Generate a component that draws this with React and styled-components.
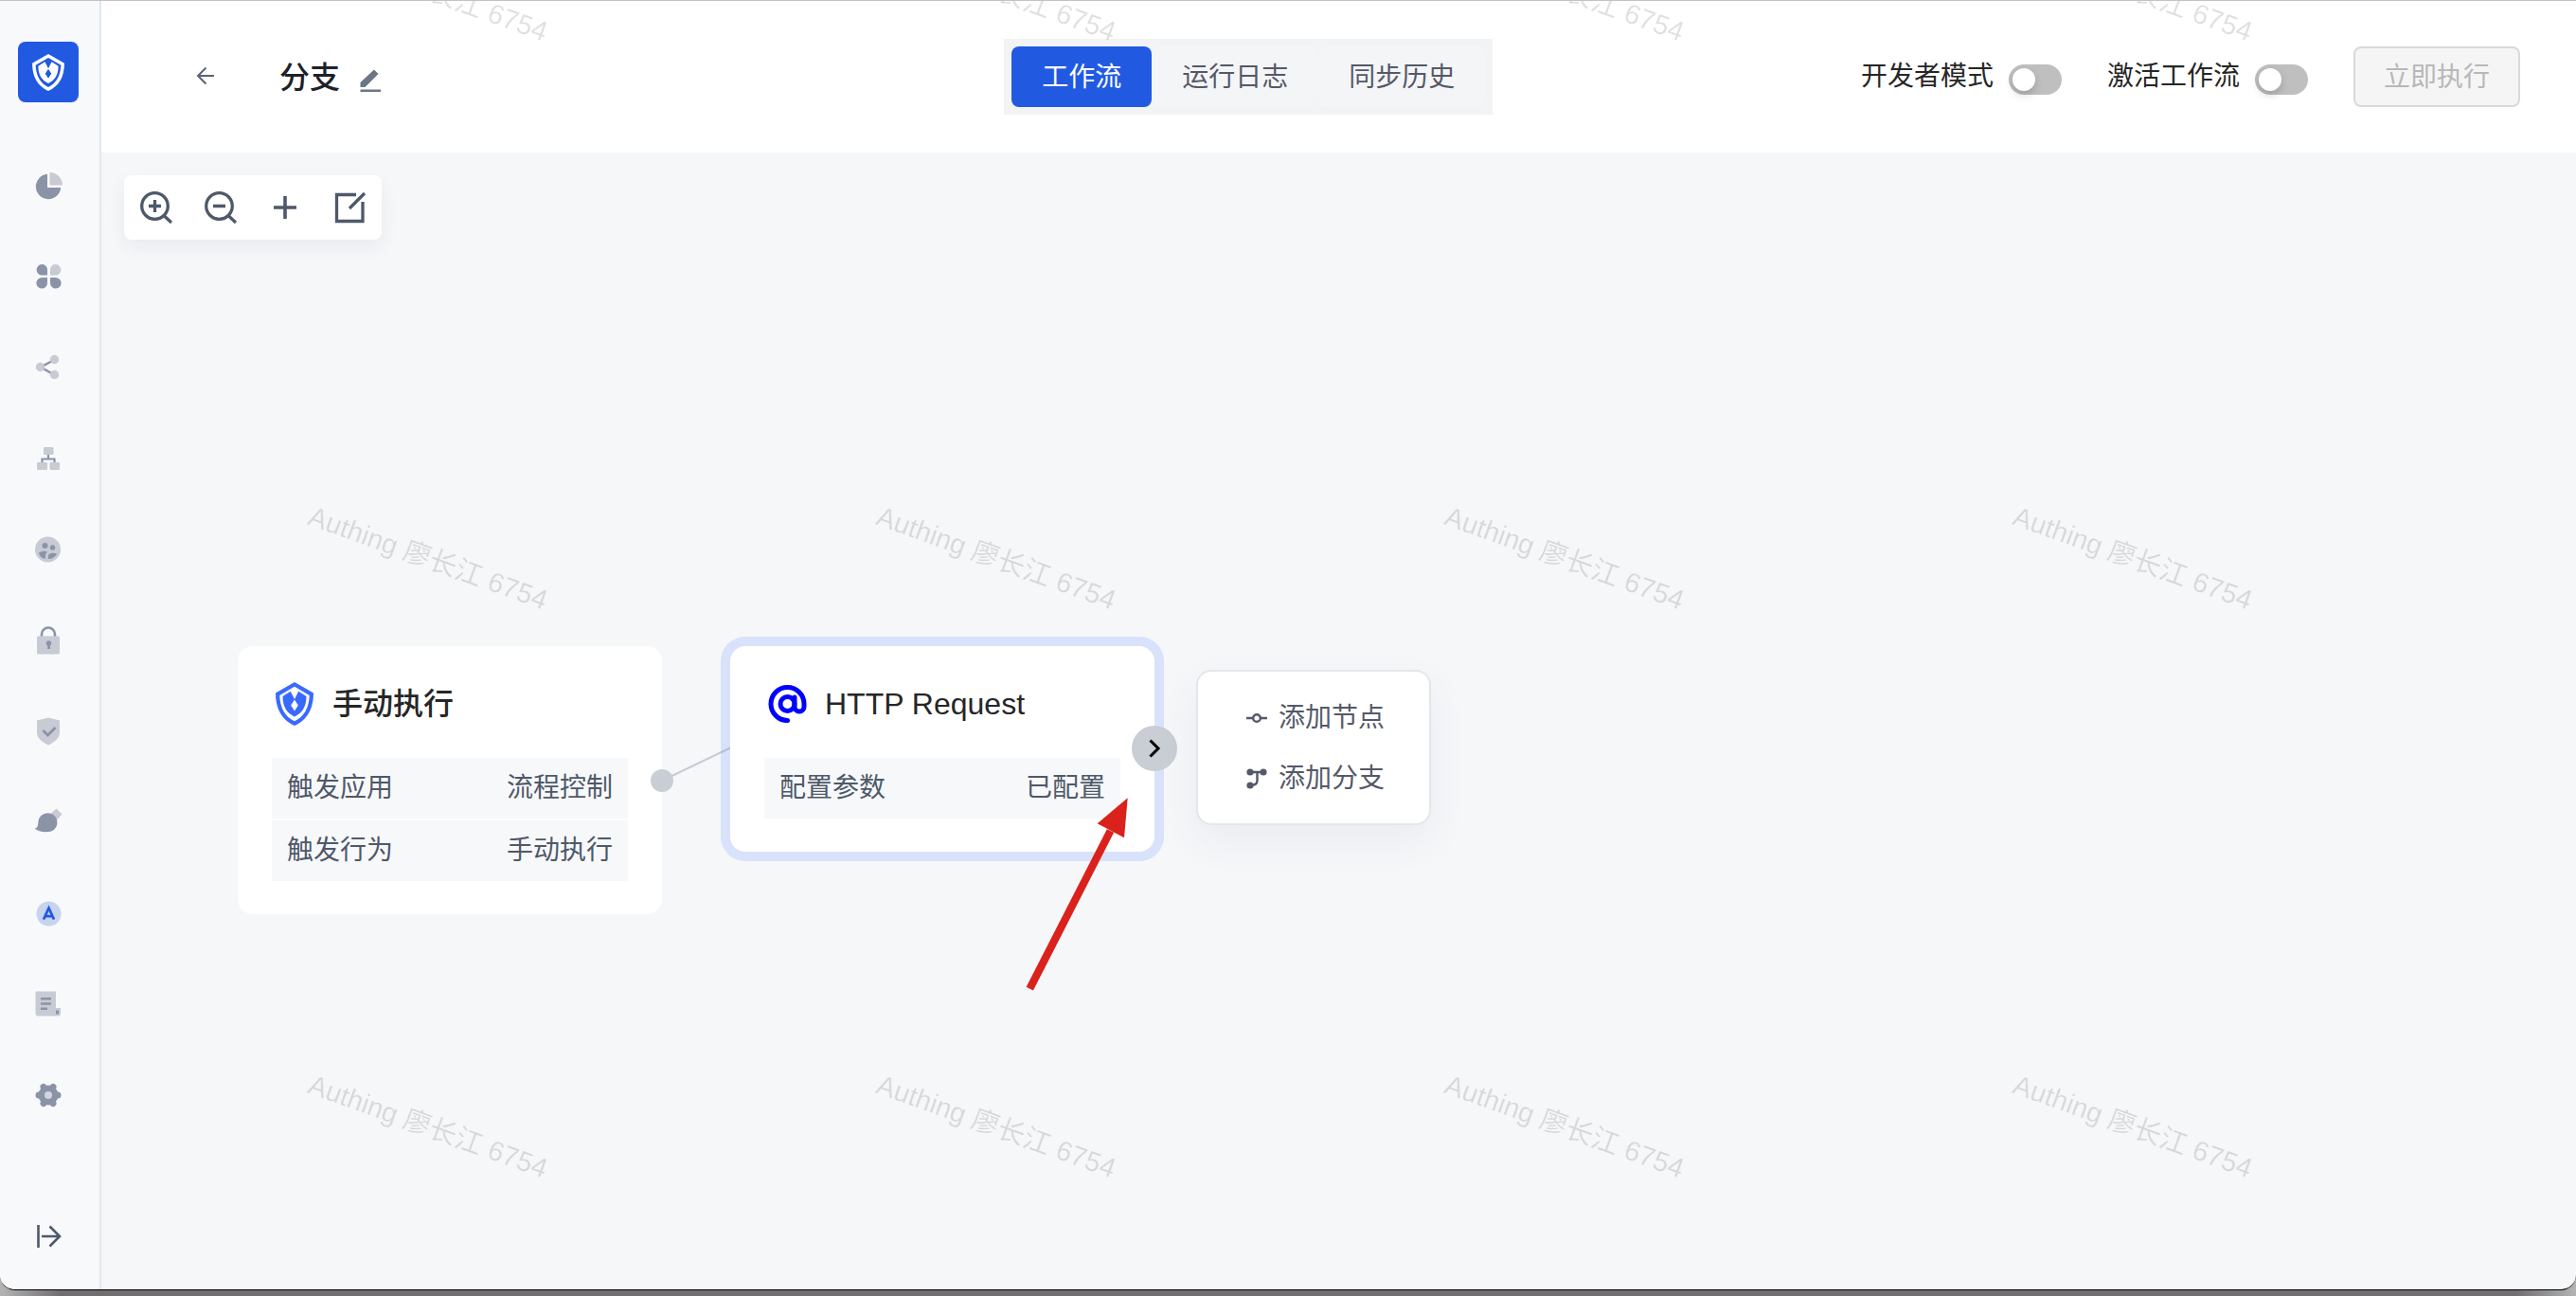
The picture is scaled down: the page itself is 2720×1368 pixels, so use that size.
import React, { useState } from "react";
import styled, { createGlobalStyle, css } from "styled-components";

const GlobalStyle = createGlobalStyle`
  * { box-sizing: border-box; }
  body {
    margin: 0;
    background: linear-gradient(90deg, #b4b4b4, #706e6e 64px calc(100% - 64px), #b4b4b4);
    font-family: "Liberation Sans", "Noto Sans CJK SC", sans-serif;
    font-size: 28px;
    color: #262626;
  }
  button { font-family: inherit; }
`;

const Window = styled.div`
  position: relative;
  display: flex;
  min-height: calc(100vh - 6px);
  overflow: hidden;
  border-top: 1px solid #c2c2c4;
  border-bottom: 1px solid #000;
  border-radius: 0 0 16px 16px;
  background: #f5f7f9;
`;

const Sidebar = styled.aside`
  flex: none;
  display: flex;
  flex-direction: column;
  width: 107px;
  padding: 43px 0 8px 19px;
  border-right: 2px solid #e4e6ec;
  background: #f7f9fb;
`;

const Brand = styled.a`
  display: grid;
  place-items: center;
  width: 64px;
  height: 64px;
  margin-bottom: 40px;
  border-radius: 8px;
  background: #215ae1;
`;

const Nav = styled.nav`
  flex: 1;
  display: flex;
  flex-direction: column;
`;

const navItem = css`
  display: grid;
  place-items: center;
  width: 64px;
  height: 96px;
`;

const NavLink = styled.a`
  ${navItem}
`;

const ExpandButton = styled.button`
  ${navItem}
  padding: 0;
  border: 0;
  background: none;
  cursor: pointer;
`;

const Main = styled.div`
  flex: 1;
  display: flex;
  flex-direction: column;
  min-width: 0;
`;

const Header = styled.header`
  display: grid;
  grid-template-columns: 5fr auto 6fr;
  align-items: center;
  height: 160px;
  background: #fff;
`;

const TitleGroup = styled.div`
  display: flex;
  align-items: center;
  padding-left: 96px;
`;

const IconButton = styled.button`
  display: grid;
  place-items: center;
  width: ${(p) => p.$size}px;
  height: ${(p) => p.$size}px;
  padding: 0;
  border: 0;
  background: none;
  cursor: pointer;
`;

const Title = styled.h1`
  margin: 0 16px 0 64px;
  padding-top: 2px;
  font-size: 32px;
  line-height: 48px;
  font-weight: 500;
  color: #1d2129;
`;

const Tabs = styled.div`
  display: flex;
  padding: 8px;
  background: #f1f3f5;
`;

const Tab = styled.button`
  height: 64px;
  padding: 2px 32px 0;
  border: 0;
  border-radius: 8px;
  font-size: 28px;
  line-height: 40px;
  color: ${(p) => (p.$active ? "#fff" : "#545968")};
  background: ${(p) => (p.$active ? "#215ae1" : "#f4f5f7")};
  cursor: pointer;
`;

const Actions = styled.div`
  display: flex;
  align-items: center;
  justify-content: flex-end;
  gap: 48px;
  padding-right: 59px;
`;

const SwitchLabel = styled.label`
  display: flex;
  align-items: flex-end;
  gap: 16px;
  line-height: 38px;
`;

const Switch = styled.input`
  appearance: none;
  width: 56px;
  height: 32px;
  margin: 0;
  padding: 4px;
  border-radius: 16px;
  background: ${(p) => (p.checked ? "#215ae1" : "#bfbfbf")};
  cursor: pointer;

  &::before {
    content: "";
    display: block;
    width: 24px;
    height: 24px;
    margin-left: ${(p) => (p.checked ? 24 : 0)}px;
    border-radius: 50%;
    background: #fff;
    box-shadow: 0 4px 8px rgba(0, 35, 11, 0.2);
  }
`;

const RunButton = styled.button`
  height: 64px;
  padding: 2px 30px 0;
  border: 2px solid #d9d9d9;
  border-radius: 8px;
  font-size: 28px;
  line-height: 40px;
  color: #b8b8b8;
  background: #f5f5f5;
`;

const Canvas = styled.main`
  position: relative;
  flex: 1;
  padding: 24px;
`;

const Toolbar = styled.div`
  display: inline-flex;
  border-radius: 8px;
  background: #fff;
  box-shadow: 0 8px 20px rgba(30, 40, 60, 0.06);
`;

const Edges = styled.svg`
  position: absolute;
  left: 0;
  top: 0;
  width: 100%;
  height: 100%;
  pointer-events: none;
`;

const Node = styled.section`
  position: absolute;
  left: ${(p) => p.$x}px;
  top: ${(p) => p.$y}px;
  width: 448px;
  padding: 36px 36px 35px;
  border-radius: 16px;
  background: #fff;
  box-shadow: ${(p) => (p.$selected ? "0 0 0 10px rgba(57, 106, 255, 0.15)" : "none")};
`;

const NodeHeader = styled.header`
  display: grid;
  grid-template-columns: 48px 1fr;
  column-gap: 16px;
  align-items: center;
  justify-items: center;
  height: 50px;
  margin-bottom: 32px;
`;

const NodeTitle = styled.h2`
  justify-self: start;
  margin: 0;
  font-size: 32px;
  line-height: 48px;
  font-weight: 500;
`;

const Params = styled.dl`
  display: grid;
  gap: 2px;
  margin: 0;
`;

const Param = styled.div`
  display: flex;
  align-items: center;
  justify-content: space-between;
  height: 64px;
  padding: 0 16px;
  line-height: 40px;
  color: #4e5969;
  background: #f7f8fa;

  dt, dd { margin: 0; }
`;

const Port = styled.span`
  position: absolute;
  right: -12px;
  top: 130px;
  width: 24px;
  height: 24px;
  border-radius: 50%;
  background: #c9cdd4;
`;

const AddButton = styled.button`
  position: absolute;
  right: -24px;
  top: 84px;
  display: grid;
  place-items: center;
  width: 48px;
  height: 48px;
  padding: 0;
  border: 0;
  border-radius: 50%;
  background: #c9cdd4;
  cursor: pointer;
`;

const Menu = styled.div`
  position: absolute;
  left: 1156px;
  top: 546px;
  width: 248px;
  padding: 16px 0;
  border: 2px solid #e5e6eb;
  border-radius: 16px;
  background: #fff;
  box-shadow: 0 16px 40px rgba(80, 80, 130, 0.07);
`;

const MenuItem = styled.button`
  display: flex;
  align-items: center;
  justify-content: center;
  gap: 12px;
  width: 100%;
  height: 64px;
  padding: 2px 0 0 4px;
  border: 0;
  font-size: 28px;
  line-height: 40px;
  color: #545968;
  background: none;
  cursor: pointer;
`;

const Watermarks = styled.div`
  position: absolute;
  inset: -312px 0 0 152px;
  display: grid;
  grid-template-columns: repeat(4, 600px);
  grid-auto-rows: 600px;
  overflow: hidden;
  pointer-events: none;
`;

const WatermarkCell = styled.div`
  display: grid;
  place-items: center;
`;

const WatermarkText = styled.span`
  transform: rotate(20deg);
  font-size: 29px;
  line-height: 40px;
  white-space: nowrap;
  color: rgba(0, 0, 0, 0.12);
`;

const Annotation = styled.svg`
  position: absolute;
  left: 970px;
  top: 670px;
  pointer-events: none;
`;

const DARK = "#8b93a7";
const LIGHT = "#c8cad4";

function Shield({ width, height, color, inner }) {
  return (
    <svg width={width} height={height} viewBox="0 0 40 46" aria-hidden="true">
      <path fill={color} fillRule="evenodd" d="M20 0 40 11.500C40 29 33 40 20 46 7 40 0 29 0 11.500ZM20 4.800 4.200 14C4.800 27.500 10 36.500 20 41.300 30 36.500 35.200 27.500 35.800 14Z" />
      <path fill={color} d="M15.800 9.800 20 18l4.200-8.200L32.500 15C32.500 25.500 28.500 32.500 20 36.500 11.500 32.500 7.500 25.500 7.500 15Z" />
      <path fill={inner} d="M20 18.500 23.800 24.500 20 30.500 16.200 24.500ZM18.700 14.500 20 17l1.300-2.500L20 12Z" />
    </svg>
  );
}

const navIcons = [
  ["概览", <>
    <path fill={DARK} d="M15 3.800A13.200 13.200 0 1 0 29.200 18H15Z" />
    <path fill={LIGHT} d="M17.500 2A13.800 13.800 0 0 1 31 15.500H17.500Z" />
  </>],
  ["应用", <>
    <path fill={DARK} d="M15 14.500H9.500A5.700 5.700 0 1 1 15 8.500ZM15 17H9.500A5.800 5.800 0 1 0 15 23ZM18 17H23.500A5.800 5.800 0 1 1 18 23Z" />
    <path fill={LIGHT} d="M18 14.500H23.500A5.700 5.700 0 1 0 18 8.500Z" />
  </>],
  ["连接", <>
    <path stroke={DARK} strokeWidth="2.500" fill="none" d="M22 8 8 15.500 22 23.500" />
    <circle cx="7.500" cy="15.500" r="4.700" fill={LIGHT} /><circle cx="22.500" cy="7.500" r="4.700" fill={LIGHT} /><circle cx="22.500" cy="23.500" r="4.700" fill={LIGHT} />
  </>],
  ["组织", <>
    <path stroke={DARK} strokeWidth="2.200" fill="none" d="M16 11v6M9.500 21v-4.500h13V21" />
    <rect x="11" y="4" width="10.500" height="8" rx="1.200" fill={LIGHT} /><rect x="4" y="20" width="11" height="8" rx="1.200" fill={LIGHT} /><rect x="17.500" y="20" width="10.500" height="8" rx="1.200" fill={LIGHT} />
  </>],
  ["用户", <>
    <circle cx="15.500" cy="16" r="13.500" fill={LIGHT} />
    <circle cx="12.500" cy="12" r="3" fill={DARK} /><circle cx="20.500" cy="14" r="2.700" fill={DARK} />
    <path fill={DARK} d="M6 19.500C9 17.300 12.500 17.300 15 18.200 13 20 12.800 22 13 25.800 9 25.500 6.500 22.500 6 19.500ZM15.800 26V22.500C17 19.500 21 19 25 20.500 23.500 24 20 26 15.800 26Z" />
  </>],
  ["安全", <>
    <path stroke={DARK} strokeWidth="2.600" fill="none" d="M9 13V9.500a7 7 0 0 1 14 0V13" />
    <rect x="4" y="11.500" width="24" height="19" rx="1.500" fill={LIGHT} />
    <circle cx="16.500" cy="19" r="2.700" fill={DARK} /><rect x="15.200" y="19" width="2.800" height="6" fill={DARK} />
  </>],
  ["权限", <>
    <path fill={LIGHT} d="M16 1.500 28 4.500V17c0 6-5 10-12 13.500C9 27 4 23 4 17V4.500Z" />
    <path stroke={DARK} strokeWidth="2.800" fill="none" d="m10.500 15 5 5 8-8" />
  </>],
  ["品牌", <>
    <path fill={LIGHT} d="m18.500 7 6-5.500 6 6-6 6.500Z" />
    <path fill={DARK} d="M1.500 22.500C5 22 5 19.500 5.500 15A10 10 0 1 1 19 25.500C12 27 6 26 1.500 22.500Z" />
  </>],
  ["自动化", <>
    <circle cx="16.500" cy="16.500" r="13" fill="#c7d3ef" />
    <path stroke="#215ae1" strokeWidth="2.800" fill="none" d="M11 22.500 16.500 10.500 22 22.500M13 19.200h7" />
  </>],
  ["审计", <>
    <path fill={LIGHT} d="M3 2.500H24V20h5v5.500a3 3 0 0 1-3 3H6a3.500 3.500 0 0 1-3.500-3.500V3Z" />
    <path stroke={DARK} strokeWidth="2.600" fill="none" d="M8 10.200h11M8 15.500h11M8 20.800h7" /><rect x="24" y="22.500" width="3" height="4" fill={DARK} />
  </>],
  ["设置", <>
    <circle cx="16" cy="16" r="10.500" fill={DARK} />
    <path stroke={DARK} strokeWidth="7" strokeLinecap="round" d="M6 16h20M11 7.400l10 17.200M21 7.400 11 24.600" />
    <circle cx="16" cy="16" r="4" fill="#d3d6df" />
  </>],
];

const line = { fill: "none", stroke: "#4e5969", strokeWidth: 3.3 };

const tools = [
  ["放大", <><circle cx="16.500" cy="16.500" r="13.800" /><path d="M16.500 10v13M10 16.500h13M26 26.500l8 7.500" /></>],
  ["缩小", <><circle cx="16.500" cy="16.500" r="13.800" /><path d="M10 16.500h13M26 26.500l8 7.500" /></>],
  ["添加", <path d="M18 6v24M6 18h24" strokeWidth="3.600" />],
  ["编辑", <path d="M25 4.500H4.500v28h27.500V12M18 19 34 3" />],
];

const marks = Array.from({ length: 12 }, (_, i) => i);

function Toggle({ label }) {
  const [on, setOn] = useState(false);
  return (
    <SwitchLabel>
      {label}
      <Switch type="checkbox" role="switch" checked={on} onChange={(e) => setOn(e.target.checked)} />
    </SwitchLabel>
  );
}

function ParamRow({ name, value }) {
  return (
    <Param>
      <dt>{name}</dt>
      <dd>{value}</dd>
    </Param>
  );
}

export default function App() {
  const [tab, setTab] = useState("工作流");
  return (
    <>
      <GlobalStyle />
      <Window>
        <Sidebar>
          <Brand href="#" aria-label="Authing">
            <Shield width={34} height={39} color="#fff" inner="#215ae1" />
          </Brand>
          <Nav>
            {navIcons.map(([name, icon]) => (
              <NavLink key={name} href="#" aria-label={name}>
                <svg width="32" height="32" viewBox="0 0 32 32">{icon}</svg>
              </NavLink>
            ))}
          </Nav>
          <ExpandButton aria-label="展开">
            <svg width="32" height="32" viewBox="0 0 32 32" fill="none" stroke="#4e5969" strokeWidth="2.600">
              <path d="M5.500 4v24M9 16h18M17.500 5.500 28 16 17.500 26.500" />
            </svg>
          </ExpandButton>
        </Sidebar>

        <Main>
          <Header>
            <TitleGroup>
              <IconButton $size={28} aria-label="返回">
                <svg width="20" height="20" viewBox="0 0 20 20" fill="none" stroke="#5b6472" strokeWidth="2">
                  <path d="M19 9H2M10.500 .500 2 9l8.500 8.500" />
                </svg>
              </IconButton>
              <Title>分支</Title>
              <IconButton $size={32} aria-label="编辑名称">
                <svg width="24" height="32" viewBox="0 0 24 32" fill="#6b7785">
                  <path d="M1.500 22 16 8.500 20.500 13 6.500 27H1.500ZM1.500 29.500h21.500v2.500H1.500Z" />
                </svg>
              </IconButton>
            </TitleGroup>
            <Tabs role="tablist">
              {["工作流", "运行日志", "同步历史"].map((name) => (
                <Tab key={name} role="tab" aria-selected={tab === name} $active={tab === name} onClick={() => setTab(name)}>
                  {name}
                </Tab>
              ))}
            </Tabs>
            <Actions>
              <Toggle label="开发者模式" />
              <Toggle label="激活工作流" />
              <RunButton disabled>立即执行</RunButton>
            </Actions>
          </Header>

          <Canvas>
            <Toolbar>
              {tools.map(([name, icon]) => (
                <IconButton key={name} $size={68} aria-label={name}>
                  <svg width="36" height="36" viewBox="0 0 36 36" {...line}>{icon}</svg>
                </IconButton>
              ))}
            </Toolbar>

            <Edges>
              <path d="M592 663 665 628" stroke="#c9cad3" strokeWidth="2" fill="none" />
            </Edges>

            <Node $x={144} $y={521}>
              <NodeHeader>
                <Shield width={40} height={46} color="#396aff" inner="#fff" />
                <NodeTitle>手动执行</NodeTitle>
              </NodeHeader>
              <Params>
                <ParamRow name="触发应用" value="流程控制" />
                <ParamRow name="触发行为" value="手动执行" />
              </Params>
              <Port />
            </Node>

            <Node $x={664} $y={521} $selected>
              <NodeHeader>
                <svg width="48" height="48" viewBox="0 0 48 48" fill="none" stroke="#0000ff" strokeWidth="5" strokeLinecap="round">
                  <circle cx="24.500" cy="24" r="7.500" />
                  <path d="M32 17v10a5 5 0 0 0 10 0V24A17.500 17.500 0 1 0 24.500 41.500" />
                </svg>
                <NodeTitle>HTTP Request</NodeTitle>
              </NodeHeader>
              <Params>
                <ParamRow name="配置参数" value="已配置" />
              </Params>
              <AddButton aria-label="添加">
                <svg width="24" height="24" viewBox="0 0 24 24" fill="none" stroke="#000" strokeWidth="3">
                  <path d="M7.500 3.500 16 12l-8.500 8.500" />
                </svg>
              </AddButton>
            </Node>

            <Menu role="menu">
              <MenuItem role="menuitem">
                <svg width="22" height="22" viewBox="0 0 22 22" fill="none" stroke="#545968" strokeWidth="2.400">
                  <path d="M0 11h7M15 11h7" /><circle cx="11" cy="11" r="3.800" />
                </svg>
                添加节点
              </MenuItem>
              <MenuItem role="menuitem">
                <svg width="22" height="22" viewBox="0 0 22 22" fill="#545968">
                  <circle cx="4" cy="4" r="3.600" /><circle cx="18" cy="4" r="3.600" /><circle cx="4" cy="18" r="3.600" />
                  <path fill="none" stroke="#545968" strokeWidth="2.400" d="M4 4h14M11.500 4v9c0 3-2 5-7.500 5" />
                </svg>
                添加分支
              </MenuItem>
            </Menu>

            <Annotation width="126" height="220" viewBox="0 0 126 220" aria-hidden="true">
              <path d="M10.300 212.700 95.500 46" stroke="#da211b" strokeWidth="8.200" />
              <path d="M113.700 11.300 81.700 38.300 110 53.300Z" fill="#da211b" />
            </Annotation>
          </Canvas>
        </Main>

        <Watermarks aria-hidden="true">
          {marks.map((i) => (
            <WatermarkCell key={i}>
              <WatermarkText>Authing 廖长江 6754</WatermarkText>
            </WatermarkCell>
          ))}
        </Watermarks>
      </Window>
    </>
  );
}
